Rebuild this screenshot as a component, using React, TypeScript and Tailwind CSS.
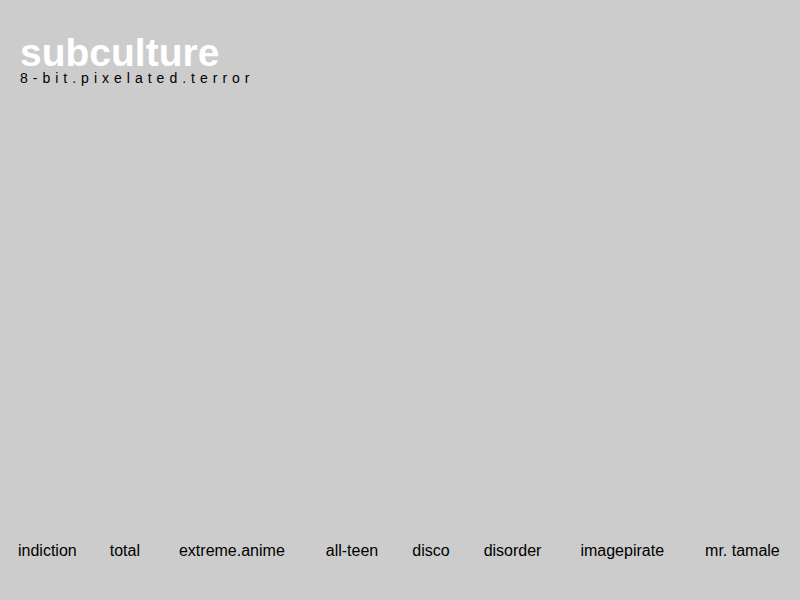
export default function App() {
  const items = [
    { t: "indiction", m: "" },
    { t: "total", m: "ml-[33px]" },
    { t: "extreme.anime", m: "ml-[39px]" },
    { t: "all-teen", m: "ml-[41px]" },
    { t: "disco", m: "ml-[34px]" },
    { t: "disorder", m: "ml-[34px]" },
    { t: "imagepirate", m: "ml-[39px]" },
    { t: "mr. tamale", m: "ml-[41px]" },
  ];
  return (
    <div
      className="h-[600px] w-[800px] bg-[#cccccc] flex flex-col justify-between"
      style={{ fontFamily: '"Liberation Sans", Arial, sans-serif' }}
    >
      <div className="pt-[34px] pl-[20px]">
        <div className="text-[39px] leading-[37px] font-bold text-white">subculture</div>
        <div className="text-[14px] leading-none tracking-[5px] text-black">
          8-bit.pixelated.terror
        </div>
      </div>
      <nav className="flex pl-[18px] pb-[41px] text-[16px] leading-none text-black">
        {items.map((it) => (
          <a key={it.t} className={it.m}>
            {it.t}
          </a>
        ))}
      </nav>
    </div>
  );
}
